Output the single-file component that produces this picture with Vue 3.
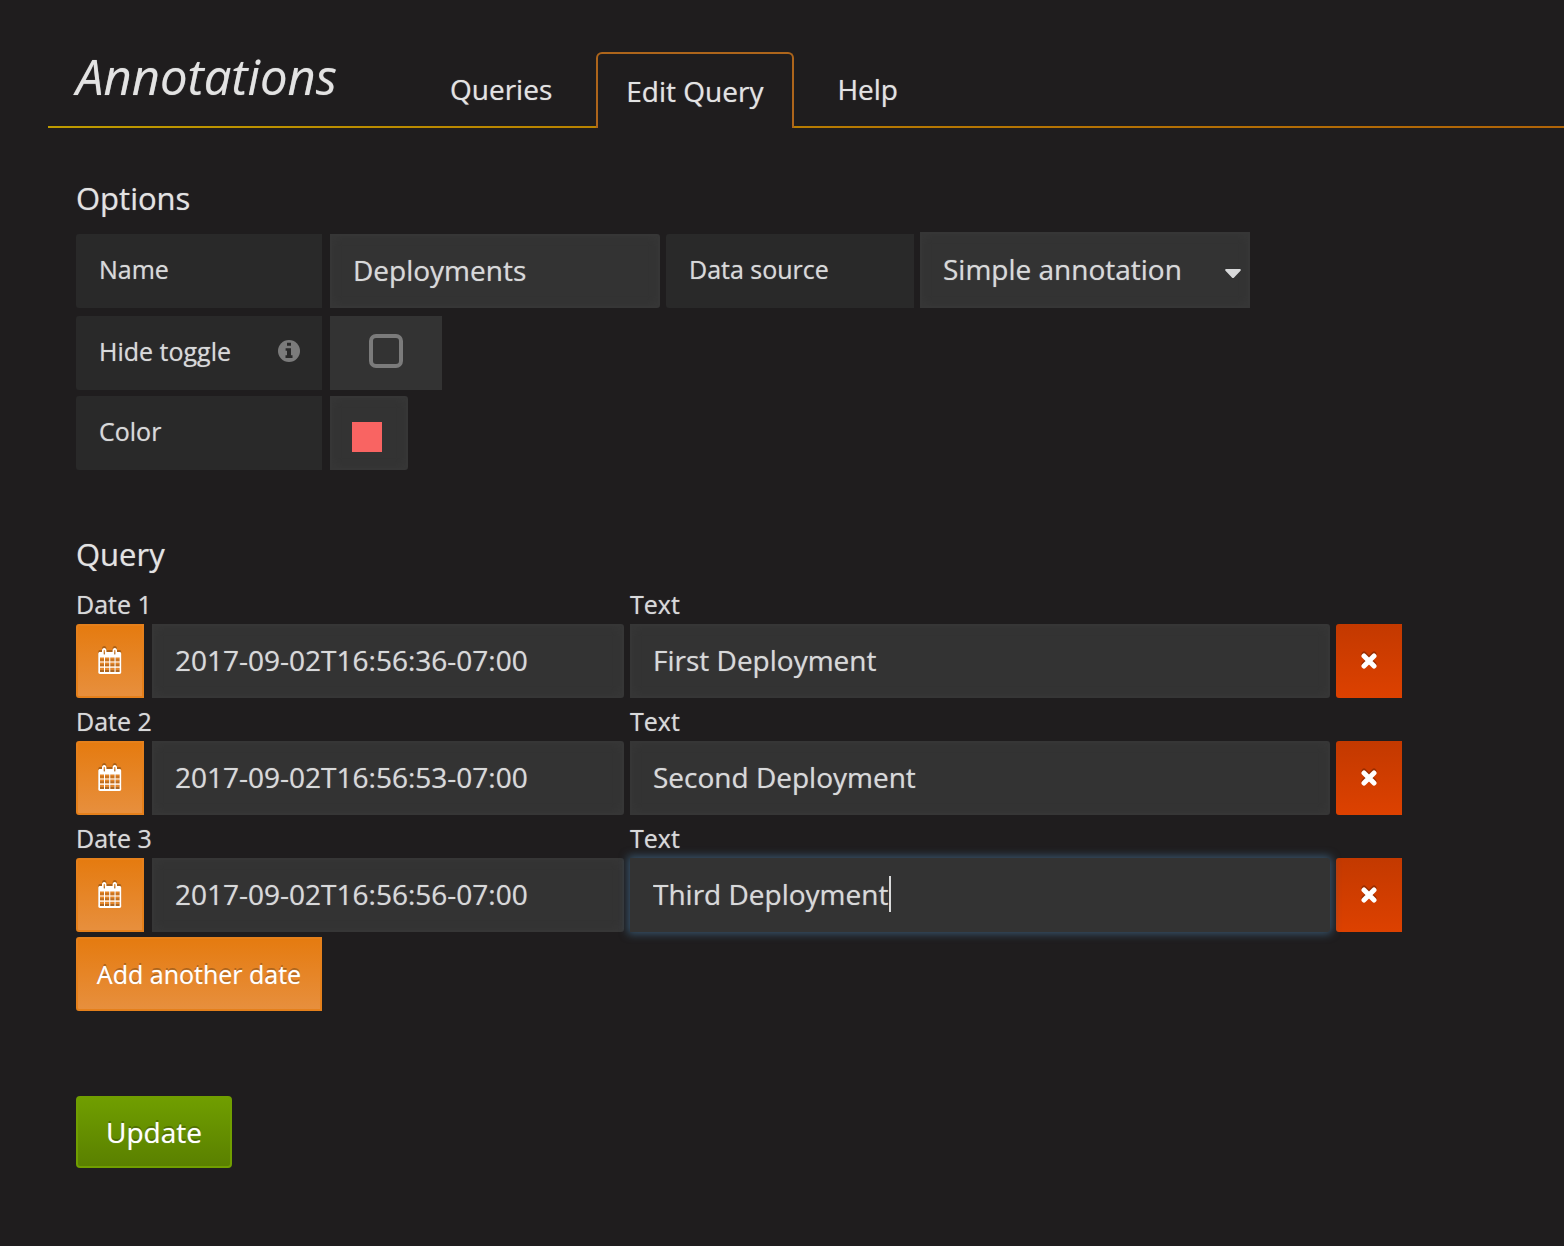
<script setup>
import { reactive, ref } from 'vue'

const tabs = ['Queries', 'Edit Query', 'Help']
const activeTab = ref('Edit Query')
const form = reactive({
  name: 'Deployments',
  datasource: 'Simple annotation',
  hide: false,
  color: '#f96462',
})
const dates = ref([
  { date: '2017-09-02T16:56:36-07:00', text: 'First Deployment' },
  { date: '2017-09-02T16:56:53-07:00', text: 'Second Deployment' },
  { date: '2017-09-02T16:56:56-07:00', text: 'Third Deployment' },
])
const focused = ref(2)

function addDate() {
  dates.value.push({ date: '', text: '' })
}
function removeDate(i) {
  dates.value.splice(i, 1)
}
</script>

<template>
  <main class="page">
    <header class="header">
      <h1 class="title">Annotations</h1>
      <nav class="tabs">
        <a
          v-for="tab in tabs"
          :key="tab"
          href="#"
          class="tab"
          :class="{ active: tab === activeTab }"
          @click.prevent="activeTab = tab"
        >{{ tab }}</a>
      </nav>
    </header>

    <form class="body" @submit.prevent>
      <section class="options">
        <h2 class="heading">Options</h2>
        <div class="row first">
          <label class="label" for="name">Name</label>
          <input id="name" v-model="form.name" class="field name" type="text" />
          <label class="label source" for="source">Data source</label>
          <div class="select-wrap">
            <select id="source" v-model="form.datasource" class="field select">
              <option>Simple annotation</option>
            </select>
            <svg class="caret" width="16" height="9" viewBox="0 0 16 9" aria-hidden="true">
              <path d="M1.4 0h13.2c1.1 0 1.6 1 .9 1.8L9.1 8.4c-.6.7-1.6.7-2.2 0L.5 1.8C-.2 1 .3 0 1.4 0z" fill="#d8d9da" />
            </svg>
          </div>
        </div>
        <div class="row">
          <label class="label" for="hide">
            Hide toggle
            <svg class="info" width="22" height="22" viewBox="0 0 22 22" aria-hidden="true">
              <circle cx="11" cy="11" r="11" fill="#7b7b7b" />
              <path d="M9 2.8h4v3H9zM7.6 8.2H13v7h1.500V18h-7v-2.8H9v-4.400H7.6z" fill="#292929" />
            </svg>
          </label>
          <div class="check-cell">
            <input id="hide" v-model="form.hide" class="check" type="checkbox" />
          </div>
        </div>
        <div class="row">
          <label class="label" for="color">Color</label>
          <div class="color-cell">
            <input id="color" v-model="form.color" class="swatch" type="color" />
          </div>
        </div>
      </section>

      <section class="query">
        <h2 class="heading">Query</h2>
        <div v-for="(item, i) in dates" :key="i" class="entry">
          <div class="date-col">
            <label class="caption" :for="'date' + i">Date {{ i + 1 }}</label>
            <div class="controls">
              <button type="button" class="btn orange calendar" aria-label="Pick a date">
                <svg width="24" height="26" viewBox="0 0 24 26" aria-hidden="true">
                  <path fill="#fff" fill-rule="evenodd" d="M2 4h2V2.500C4 1 4.900 0 6.200 0S8.400 1 8.400 2.500V4h6.200V2.500C14.600 1 15.500 0 16.800 0S19 1 19 2.500V4h2.500c1 0 1.700.7 1.700 1.700v18.500c0 1-.7 1.700-1.700 1.700H2c-1 0-1.700-.7-1.700-1.700V5.700C.3 4.700 1 4 2 4zM5.700 2.500v3.500c0 .8 1.200.8 1.200 0V2.500c0-.8-1.200-.8-1.200 0zM16.200 2.500v3.500c0 .8 1.200.8 1.200 0V2.500c0-.8-1.200-.8-1.200 0zM2 9.500v4h4v-4zM7 9.500v4h4.200v-4zM12.300 9.500v4h4.200v-4zM17.600 9.500v4h4v-4zM2 14.600v4h4v-4zM7 14.600v4h4.200v-4zM12.300 14.600v4h4.200v-4zM17.600 14.600v4h4v-4zM2 19.700v4.300h4v-4.300zM7 19.700v4.300h4.200v-4.300zM12.300 19.700v4.300h4.200v-4.300zM17.600 19.700v4.300h4v-4.300z" />
                </svg>
              </button>
              <input :id="'date' + i" v-model="item.date" class="field" type="text" />
            </div>
          </div>
          <div class="text-col">
            <label class="caption" :for="'text' + i">Text</label>
            <div class="controls">
              <div class="text-wrap" :class="{ focused: focused === i }">
                <input :id="'text' + i" v-model="item.text" class="field" type="text" @focus="focused = i" />
                <span v-if="focused === i" class="cursor" aria-hidden="true"><span class="typed">{{ item.text }}</span></span>
              </div>
              <button type="button" class="btn red" aria-label="Remove" @click="removeDate(i)">
                <svg width="16" height="16" viewBox="0 0 16 16" aria-hidden="true">
                  <path d="M3 3l10 10M13 3L3 13" stroke="#fff" stroke-width="5" stroke-linecap="round" />
                </svg>
              </button>
            </div>
          </div>
        </div>
        <button type="button" class="btn orange add" @click="addDate">Add another date</button>
      </section>

      <div class="actions">
        <button type="submit" class="btn update">Update</button>
      </div>
    </form>
  </main>
</template>

<style>
body {
  background: #1f1d1e;
}
</style>

<style scoped>
.page,
.page * {
  box-sizing: border-box;
}
.page {
  padding: 52px 0 78px 48px;
  color: #d8d9da;
  font-family: "Open Sans", "Noto Sans", sans-serif;
  font-size: 25px;
  text-shadow: 0 0 1px rgba(216, 217, 218, 0.6);
  background: #1f1d1e;
}
.page input,
.page select,
.page button {
  font-family: inherit;
  margin: 0;
}
.header {
  display: flex;
  align-items: flex-start;
  height: 76px;
  padding-left: 28px;
  background: linear-gradient(to right, #be9b00 0%, #b88000 40%, #b06408 100%) bottom / 100% 2px no-repeat;
}
.title {
  flex: none;
  width: 344px;
  margin: 0;
  font-size: 49px;
  line-height: 48px;
  font-style: italic;
  font-weight: 400;
  color: #e3e3e3;
}
.tabs {
  display: flex;
}
.tab {
  height: 74px;
  padding: 0 30px;
  font-size: 28px;
  line-height: 74px;
  color: #e3e3e3;
  text-decoration: none;
  white-space: nowrap;
}
.tab.active {
  height: 76px;
  margin: 0 13px 0 14px;
  padding: 0 29px 0 28px;
  border: 2px solid #ad651b;
  border-bottom: 0;
  border-radius: 6px 6px 0 0;
  background: #1f1d1e;
}
.body {
  max-width: 1354px;
  padding: 46px 0 0 28px;
}
.heading {
  margin: 0 0 12px;
  font-size: 31px;
  line-height: 48px;
  font-weight: 400;
  color: #e3e3e3;
}
.row {
  display: flex;
  align-items: flex-end;
  gap: 8px;
  margin-bottom: 6px;
}
.row.first {
  height: 74px;
  margin-bottom: 8px;
}
.label {
  display: flex;
  flex: none;
  align-items: center;
  justify-content: space-between;
  width: 246px;
  height: 74px;
  padding: 0 22px 5px 23px;
  border-radius: 3px 0 0 3px;
  background: #292929;
}
.source {
  width: 248px;
  margin: 0 -2px;
}
.field {
  display: block;
  width: 100%;
  min-width: 0;
  height: 74px;
  padding: 0 20px 3px 21px;
  border: 2px solid #363636;
  border-radius: 0 3px 3px 0;
  outline: none;
  background: #333;
  box-shadow: inset 0 0 8px #383838;
  color: #d8d9da;
  font-size: 28px;
  text-shadow: inherit;
}
.name {
  flex: 0 1 330px;
}
.select-wrap {
  position: relative;
  flex: 0 1 330px;
}
.select {
  height: 76px;
  padding-bottom: 2px;
  border-radius: 0;
  appearance: none;
}
.caret {
  position: absolute;
  right: 9px;
  bottom: 30px;
  pointer-events: none;
}
.check-cell {
  display: flex;
  align-items: center;
  justify-content: center;
  width: 112px;
  height: 74px;
  padding-bottom: 4px;
  background: #333;
}
.check {
  width: 34px;
  height: 34px;
  border: 4px solid #7b7b7b;
  border-radius: 7px;
  appearance: none;
}
.color-cell {
  width: 78px;
  height: 74px;
  padding: 24px 20px;
  border: 2px solid #363636;
  border-radius: 0 3px 3px 0;
  background: #333;
  box-shadow: inset 0 0 8px #383838;
}
.swatch {
  display: block;
  width: 30px;
  height: 30px;
  padding: 0;
  border: 0;
  appearance: none;
  background: none;
}
.swatch::-webkit-color-swatch-wrapper {
  padding: 0;
}
.swatch::-webkit-color-swatch {
  border: 0;
  border-radius: 0;
}
.query {
  margin-top: 60px;
}
.query .heading {
  margin-bottom: 8px;
}
.entry {
  display: flex;
  gap: 6px;
  margin-bottom: 5px;
}
.date-col {
  flex: 0 1 548px;
}
.text-col {
  flex: 1;
}
.caption {
  display: block;
  height: 38px;
  line-height: 36px;
}
.controls {
  display: flex;
  gap: 8px;
}
.text-col .controls {
  gap: 6px;
}
.text-wrap {
  position: relative;
  flex: 1;
}
.focused .field {
  border-color: #333;
  background: #333;
  box-shadow: 0 0 8px 2px #37546c;
  caret-color: transparent;
}
.cursor {
  position: absolute;
  top: 18px;
  left: 23px;
  height: 36px;
  padding-right: 1px;
  border-right: 2px solid #d8d9da;
  pointer-events: none;
}
.typed {
  visibility: hidden;
  font-size: 28px;
  white-space: pre;
}
.btn {
  display: flex;
  flex: none;
  align-items: center;
  justify-content: center;
  height: 74px;
  padding: 0;
  border: 0;
  color: #fff;
  text-shadow: 0 0 1px rgba(255, 255, 255, 0.6), 0 -2px 0 rgba(0, 0, 0, 0.25);
}
.btn svg {
  filter: drop-shadow(0 -2px 0 rgba(0, 0, 0, 0.25));
}
.orange {
  width: 68px;
  border: 2px solid #e5801b;
  border-radius: 3px 0 0 3px;
  background: linear-gradient(#e57b10, #e78f3d);
}
.red {
  width: 66px;
  border-radius: 3px 0 0 3px;
  background: linear-gradient(#c33900, #dd4100);
}
.add {
  width: 246px;
  font-size: 25px;
}
.actions {
  margin-top: 85px;
}
.update {
  width: 156px;
  height: 72px;
  border: 2px solid #709e00;
  border-radius: 4px;
  background: linear-gradient(#709e00, #5a8000);
  font-size: 28px;
}
</style>
